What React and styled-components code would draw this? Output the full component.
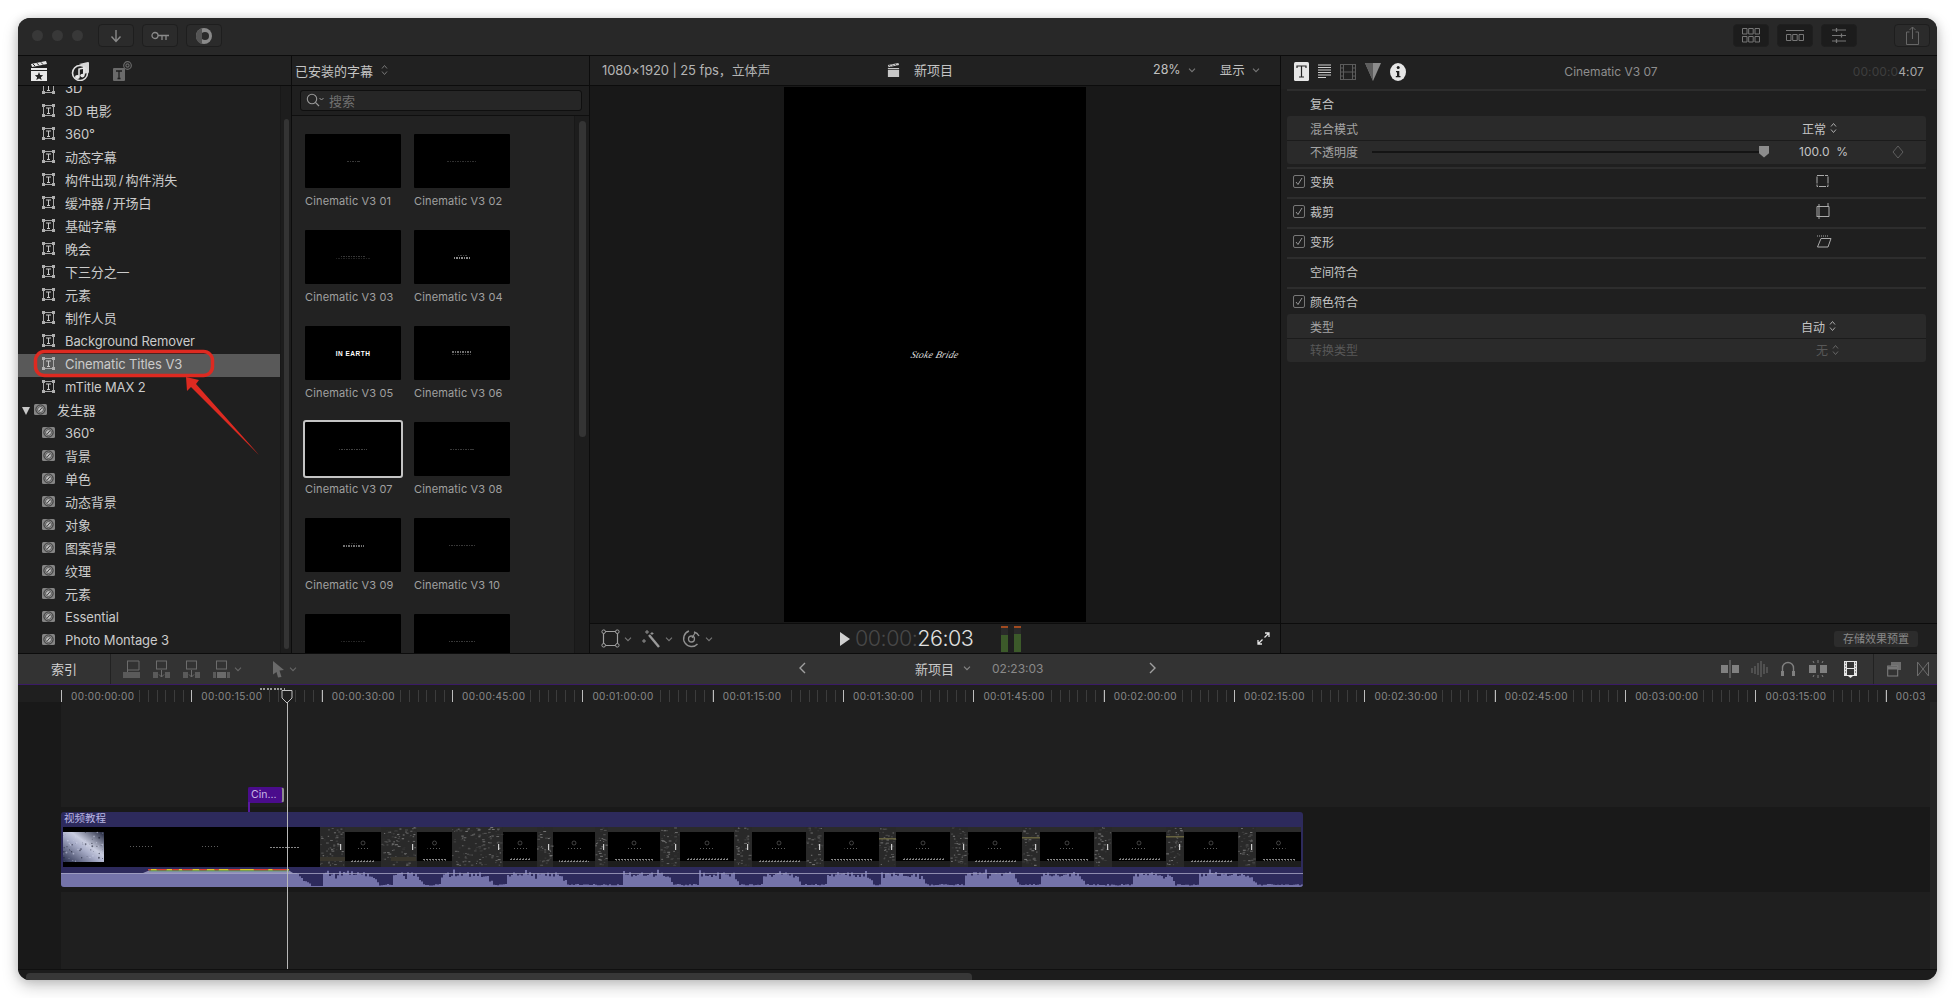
import React from 'react';
import styled, { createGlobalStyle } from 'styled-components';

const Global = createGlobalStyle`
  html, body { margin: 0; padding: 0; background: #fff; }
  body { font-family: Inter, "Noto Sans CJK SC", sans-serif; }
  * { box-sizing: border-box; }
`;

const Stage = styled.div`
  width: 1955px; height: 998px; padding: 18px 0 0 18px; background: #fff; overflow: hidden;
`;
const Win = styled.div`
  position: relative; width: 1919px; height: 962px; background: #1f1f1f;
  border-radius: 12px; overflow: hidden; display: flex; flex-direction: column;
`;
const WinShadow = styled.div`
  width: 1919px; height: 962px; border-radius: 12px;
  box-shadow: 0 6px 16px rgba(0,0,0,.22), 0 0 10px rgba(0,0,0,.14);
`;

/* title bar */
const TitleBar = styled.div`
  height: 38px; flex: none; background: #282828; border-bottom: 1px solid #0c0c0c;
  display: flex; align-items: center; padding: 0 7px 2px 14px;
`;
const Dot = styled.span`
  width: 11px; height: 11px; border-radius: 50%; background: #383838; margin-right: 9px;
`;
const TBtn = styled.div`
  width: 36px; height: 23px; border-radius: 4px; margin-left: ${p => p.$ml || 8}px;
  background: ${p => p.$dark ? '#1c1c1c' : '#2b2b2b'}; border: 1px solid ${p => p.$dark ? '#1f1f1f' : '#1e1e1e'};
  display: flex; align-items: center; justify-content: center;
`;
const Grow = styled.div`flex: 1;`;

/* workspace */
const Workspace = styled.div`
  height: 598px; flex: none; display: flex; border-bottom: 1px solid #0c0c0c;
`;
const Col = styled.div`
  width: ${p => p.$w}px; flex: none; display: flex; flex-direction: column; background: ${p => p.$bg || '#1f1f1f'};
  border-right: ${p => p.$noborder ? 'none' : '1px solid #0c0c0c'}; overflow: hidden;
`;
const PanelHead = styled.div`
  height: 30px; flex: none; background: #212121; border-bottom: 1px solid #0c0c0c;
  display: flex; align-items: center; font-size: 13px; color: #c4c4c4;
  padding: ${p => p.$pad || '0 0 1px 12px'};
`;
const HeadGap = styled.span`width: 23px; flex: none;`;
const Body = styled.div`flex: 1; min-height: 0; display: flex; overflow: hidden;`;

/* sidebar */
const ListWrap = styled.div`width: 262px; flex: none; overflow: hidden;`;
const List = styled.div`margin-top: -8px;`;
const Row = styled.div`
  height: 23px; display: flex; align-items: center; font-size: 13px; color: #cbcbcb;
  padding: 0 0 4px ${p => p.$head ? 4 : 24}px;
  background: ${p => p.$sel ? '#595959' : 'transparent'}; white-space: nowrap;
  letter-spacing: -0.1px;
`;
const Slash = styled.span`margin: 0 2.2px;`;
const RowIcon = styled.span`
  width: 13px; height: 13px; flex: none; margin-right: 10px; display: flex;
`;
const Tri = styled.span`
  width: 0; height: 0; margin: 2px 4px 0 0; border-left: 4px solid transparent; border-right: 4px solid transparent;
  border-top: 8px solid #c8c8c8;
`;
const ScrollTrack = styled.div`
  width: ${p => p.$w || 11}px; flex: none; background: #1d1d1d; border-left: 1px solid #181818; padding: ${p => p.$pad || '33px 2px 3px 3px'};
`;
const ScrollThumb = styled.div`
  width: ${p => p.$w || 5}px; height: ${p => p.$h}px; border-radius: 4px; background: #343434;
`;

/* browser */
const BrowserTitle = styled.span`margin-left: -9px; display: flex; align-items: center; gap: 8px; font-size: 13px;`;
const SearchRow = styled.div`height: 30px; flex: none; padding: 4px 7px 4px 8px; border-bottom: 1px solid #0f0f0f; background: #1f1f1f;`;
const Search = styled.div`
  height: 21px; border: 1px solid #0f0f0f; border-radius: 3px; background: #262626;
  display: flex; align-items: center; padding: 0 0 1px 5px; gap: 4px; font-size: 13px; color: #707070;
`;
const BrowserBody = styled.div`flex: 1; min-height: 0; display: flex; background: #222;`;
const Grid = styled.div`
  width: 282px; flex: none; display: grid; grid-template-columns: 96px 96px; column-gap: 13px; grid-auto-rows: 96px;
  padding: 18px 0 0 13px; overflow: hidden; align-content: start;
`;
const Cell = styled.div`display: flex; flex-direction: column;`;
const Thumb = styled.div`
  height: 54px; background: #000; border-radius: 1px; display: flex; flex-direction: column; align-items: center; justify-content: center; gap: 1px;
  outline: ${p => p.$sel ? '2px solid #c4c4c4' : 'none'};
`;
const ThumbBar = styled.span`
  width: ${p => p.$w}px; height: ${p => p.$h || 1}px; opacity: ${p => p.$o || .4};
  background: repeating-linear-gradient(90deg, #bbb 0 1.5px, transparent 1.5px 2.5px);
`;
const ThumbText = styled.span`
  font: 700 6.5px "Liberation Sans", sans-serif; color: #fff; letter-spacing: .5px; line-height: 7px; transform: scaleY(1.2);
`;
const CellLabel = styled.div`margin-top: 6px; font-size: 11px; color: #a0a0a0; letter-spacing: .15px; line-height: 14px; white-space: nowrap;`;

/* viewer */
const ViewerHead = styled.div`
  height: 30px; flex: none; background: #212121; border-bottom: 1px solid #0c0c0c;
  display: flex; align-items: center; padding: 0 14px 2px 12px; font-size: 13px; color: #b4b4b4;
`;
const ViewerFormat = styled.span`width: 168px; flex: none; white-space: nowrap; letter-spacing: -.1px;`;
const ViewerCenter = styled.div`
  display: flex; align-items: center; gap: 14px; margin-left: 117px; color: #c4c4c4; font-size: 13px;
`;
const ViewerDrop = styled.div`
  display: flex; align-items: center; gap: 7px; margin-left: ${p => p.$ml}px; color: #c0c0c0; font-size: 12.5px;
`;
const Chevron = ({ c = '#777', s = 8 }) => (
  <svg width={s} height={s} viewBox="0 0 8 8" fill="none"><path d="M1 2.6 L4 5.6 L7 2.6" stroke={c} strokeWidth="1.1" /></svg>
);
const Updown = ({ c = '#999' }) => (
  <svg width="7" height="12" viewBox="0 0 7 12" fill="none"><path d="M1 4.5 L3.5 1.5 L6 4.5 M1 7.5 L3.5 10.5 L6 7.5" stroke={c} strokeWidth="1" /></svg>
);
const ViewerStage = styled.div`
  flex: 1; min-height: 0; background: #181818; display: flex; justify-content: center; padding-top: 1px;
`;
const Video = styled.div`
  width: 302px; height: 535px; background: #000; display: flex; align-items: center; justify-content: center;
`;
const Signature = styled.span`
  font: italic 400 10px/10px "Liberation Serif", serif; color: #dcdcdc; letter-spacing: .1px; transform: skewX(-16deg);
`;
const ViewerFoot = styled.div`
  height: 30px; flex: none; background: #1f1f1f; border-top: 1px solid #0c0c0c; display: flex; align-items: center; padding: 0 10px 0 11px;
`;
const Tool = styled.div`display: flex; align-items: center; gap: 4px; margin-right: ${p => p.$mr || 9}px;`;
const Timecode = styled.div`
  font-size: 21.5px; font-weight: 300; color: #e2e2e2; letter-spacing: -.5px; margin: 0 0 2px 5px; line-height: 24px;
`;
const TcDim = styled.span`color: #484848;`;
const Meter = styled.div`
  width: 7px; height: 26px; margin-left: ${p => p.$ml}px; display: flex; flex-direction: column; background: #2a2a2a;
`;
const MeterCap = styled.div`height: 2px; background: #a04a20;`;
const MeterGap = styled.div`height: ${p => p.$h}px;`;
const MeterFill = styled.div`flex: 1; background: #3c5a2a;`;

/* inspector */
const InspHead = styled.div`
  height: 33px; flex: none; padding: 0 13px 2px 13px; display: flex; align-items: center; background: #212121;
`;
const InspIcons = styled.div`display: flex; align-items: center; gap: 9px; width: 120px;`;
const InspTitle = styled.div`flex: 1; text-align: center; font-size: 12px; color: #8e8e8e; padding-right: 36px;`;
const InspTc = styled.div`font-size: 12px; color: #a8a8a8; letter-spacing: .1px; width: 80px; text-align: right;`;
const TcFaint = styled.span`color: #3e3e3e;`;
const InspBody = styled.div`flex: 1; padding: 0 11px 0 6px; background: #1f1f1f;`;
const Sep = styled.div`height: 2px; background: #2d2d2d; margin-top: ${p => p.$mt || 0}px;`;
const IRow = styled.div`
  height: ${p => p.$h || 28}px; display: flex; align-items: center; font-size: 12px; color: #c4c4c4;
  padding: 0 0 ${p => p.$h ? 0 : 4}px 23px;
`;
const Check = styled.span`
  width: 12px; height: 13px; border: 1px solid #777; border-radius: 2px; margin: 0 5px 0 -17px; display: flex; align-items: center; justify-content: center;
`;
const IGroup = styled.div`
  background: #2a2a2a; border-radius: 3px; margin: ${p => p.$m || '0'};
`;
const GRow = styled.div`
  height: 24px; display: flex; align-items: center; padding: 0 0 ${p => p.$line ? 2 : 0}px 23px; font-size: 12px; color: ${p => p.$dim ? '#585858' : '#a4a4a4'};
  border-top: ${p => p.$line ? '1px solid #1b1b1b' : 'none'};
`;
const Value = styled.div`
  margin-left: ${p => p.$ml}px; display: flex; align-items: center; gap: 4px; color: ${p => p.$dim ? '#585858' : '#c4c4c4'}; font-size: 12px;
  width: ${p => p.$w ? p.$w + 'px' : 'auto'}; white-space: nowrap;
`;
const SliderTrack = styled.div`
  width: 393px; height: 2px; background: #141414; margin-left: 14px; position: relative;
`;
const SliderKnob = styled.span`
  position: absolute; right: -4px; top: -5px; width: 10px; height: 12px; background: #8c8c8c;
  clip-path: polygon(0 0, 100% 0, 100% 65%, 50% 100%, 0 65%);
`;
const IconSlot = styled.div`margin-left: ${p => p.$ml}px; display: flex;`;
const InspFoot = styled.div`
  height: 30px; flex: none; background: #1f1f1f; border-top: 1px solid #0c0c0c; display: flex; justify-content: flex-end; align-items: center; padding: 0 19px 0 0;
`;
const SaveBtn = styled.div`
  width: 84px; height: 16px; border-radius: 3px; background: #2c2c2c; color: #888; font-size: 11px; text-align: center; line-height: 16px; white-space: nowrap;
`;

/* timeline toolbar */
const TimeBar = styled.div`
  height: 31px; flex: none; background: #333; border-bottom: 1px solid #3a1a66; display: flex; align-items: center; font-size: 13px; color: #c8c8c8;
`;
const IndexTab = styled.div`
  width: 93px; height: 30px; border-right: 1px solid #222; display: flex; align-items: center; padding: 0 0 2px 33px; flex: none; color: #d0d0d0;
`;
const ToolIcons = styled.div`display: flex; align-items: center; gap: 13px; padding-left: 12px; width: 400px;`;
const TimeMid = styled.div`display: flex; align-items: center; padding: 0 0 2px 287px;`;
const ProjName = styled.span`margin-left: 109px; color: #c8c8c8;`;
const ProjChev = styled.span`margin-left: 9px; display: flex;`;
const ProjDur = styled.span`margin-left: 7px; width: 171px; color: #8a8a8a; font-size: 12px; padding-left: 14px;`;
const TimeRight = styled.div`margin-left: auto; display: flex; align-items: center; gap: 12px; padding-right: 8px;`;
const RightDiv = styled.div`width: 1px; height: 30px; background: #222; margin-left: 4px;`;
const RIcon = styled.span`display: flex; margin-left: ${p => p.$ml || 0}px;`;

/* ruler */
const TimelineBody = styled.div`position: relative; flex: 1; min-height: 0; display: flex; flex-direction: column;`;
const RulerBar = styled.div`
  height: 17px; flex: none; display: flex; padding-left: 43px; background: #1f1f1f;
`;
const Seg = styled.div`
  width: 130.35px; flex: none; height: 13px; margin-top: 5px; padding-left: 10px;
  background:
    linear-gradient(#bdbdbd,#bdbdbd) 0 0 / 1px 100% no-repeat,
    repeating-linear-gradient(90deg, #3c3c3c 0 1px, transparent 1px 8.69px) 0 0 / 100% 100%;
`;
const SegLabel = styled.span`
  display: block; width: 67px; margin-left: -2px; padding-left: 2px; background: #1f1f1f; font-size: 10px; line-height: 12px; color: #8a8a8a; letter-spacing: .4px; white-space: nowrap;
`;
const Tracks = styled.div`flex: 1; min-height: 0; display: flex;`;
const Gutter = styled.div`width: 43px; flex: none; background: #191919;`;
const TrackCol = styled.div`flex: 1; display: flex; flex-direction: column;`;
const UpperLane = styled.div`
  height: 105px; flex: none; padding: 85px 0 0 187px; background: #1f1f1f;
`;
const ConnClip = styled.div`
  width: 36px; height: 16px; position: relative; background: #4a0c8c; border-radius: 2px 3px 3px 0; border: 1px solid #4a0c8c; border-right: 2px solid #8d8d8d;
  color: #c9b7e6; font-size: 10.5px; line-height: 14px; padding-left: 2px;
`;
const ConnStem = styled.span`
  position: absolute; left: -1px; top: 14px; width: 2px; height: 10px; background: #5a1aa0;
`;
const Band = styled.div`height: 85px; flex: none; background: #191919; padding-top: 5px;`;
const Clip = styled.div`
  width: 1242px; height: 75px; background: #2d2a5c; border-radius: 3px; overflow: hidden; display: flex; flex-direction: column;
`;
const ClipHead = styled.div`
  height: 15px; flex: none; font-size: 10.5px; line-height: 14px; color: #b9b6e4; padding-left: 3px;
`;
const LowerLane = styled.div`flex: 1; background: #1f1f1f;`;
const VScroll = styled.div`width: 7px; flex: none; background: #252525;`;
const HScroll = styled.div`
  height: 11px; flex: none; border-top: 1px solid #101010; background: #1c1c1c; padding-top: 3px; padding-left: 8px;
`;
const HThumb = styled.div`width: 946px; height: 7px; background: #373737; border-radius: 4px 4px 0 0;`;

/* overlays */
const Playhead = styled.div`
  position: absolute; left: 268.5px; top: 6px; width: 1px; height: 278px; background: #b8b8b8;
`;
const PlayHandle = styled.svg`position: absolute; left: -5.5px; top: -1px;`;
const Dotted = styled.div`
  position: absolute; left: 242px; top: 3px; width: 25px; height: 2px;
  background: repeating-linear-gradient(90deg, #9a9a9a 0 2px, transparent 2px 3.4px);
`;
const Annotation = styled.svg`position: absolute; left: 0; top: 0; pointer-events: none;`;

/* icons */
const Box = ({ w, h, children, vb }) => <svg width={w} height={h} viewBox={vb || `0 0 ${w} ${h}`} fill="none">{children}</svg>;

const TitleIco = () => (
  <Box w={13} h={13}>
    <rect x="1.5" y="1.5" width="10" height="10" stroke="#a8a8a8" />
    <rect x="0" y="0" width="3" height="3" fill="#b0b0b0" /><rect x="10" y="0" width="3" height="3" fill="#b0b0b0" />
    <rect x="0" y="10" width="3" height="3" fill="#b0b0b0" /><rect x="10" y="10" width="3" height="3" fill="#b0b0b0" />
    <path d="M4 4 H9 M6.5 4 V9.5 M5 9.5 H8" stroke="#c8c8c8" />
  </Box>
);
const GenIco = () => (
  <Box w={13} h={13}>
    <rect x="0" y="1" width="13" height="11" rx="1.5" fill="#858585" />
    <circle cx="6.5" cy="6.5" r="4.6" fill="#8e8e8e" stroke="#2a2a2a" strokeWidth=".9" />
    <circle cx="6.5" cy="6.5" r="2.9" fill="#bcbcbc" stroke="#333" strokeWidth=".7" />
    <path d="M5.2 8 L7.8 5" stroke="#333" strokeWidth=".9" />
  </Box>
);
const Clapper = ({ c = '#e8e8e8', w = 18, h = 20, star }) => (
  <svg width={w} height={h} viewBox="0 0 18 20" fill="none">
    <path d="M1 3 L16 0 L17 3 L2 6 Z" fill={c} />
    <path d="M3 3 L5 5 M7 2.2 L9 4.4 M11 1.4 L13 3.6" stroke="#222" strokeWidth="1" />
    <path d="M1 7 H17 V9 H1 Z" fill={c} />
    <path d="M1 10 H17 V20 H1 Z" fill={c} />
    {star && <path d="M9 11 L10.2 14 L13.2 14.2 L10.9 16.2 L11.7 19 L9 17.4 L6.3 19 L7.1 16.2 L4.8 14.2 L7.8 14 Z" fill="#222" />}
  </svg>
);
const MusicCam = () => (
  <svg width="19" height="20" viewBox="0 0 19 20" fill="none">
    <path d="M8 3 L17 1 A1 1 0 0 1 18 2 V11 A1 1 0 0 1 17 12 L12 13 V5 Z" fill="#d8d8d8" />
    <circle cx="9" cy="12" r="7.5" stroke="#e0e0e0" strokeWidth="1.6" />
    <path d="M8 15.5 V8 L13 7 V14" stroke="#e8e8e8" strokeWidth="1.5" />
    <ellipse cx="6.4" cy="16" rx="2.4" ry="1.9" fill="#e8e8e8" />
    <ellipse cx="11.4" cy="14.6" rx="2.2" ry="1.8" fill="#e8e8e8" />
  </svg>
);
const TitleGen = () => (
  <svg width="19" height="20" viewBox="0 0 19 20" fill="none">
    <rect x="0" y="7" width="12" height="13" rx="1" fill="#6a6a6a" />
    <path d="M3 10 H9 M6 10 V17.5 M4.5 17.5 H7.5" stroke="#1f1f1f" strokeWidth="1.3" />
    <circle cx="14.5" cy="4.5" r="3.8" stroke="#6a6a6a" strokeWidth="1.2" />
    <circle cx="14.5" cy="4.5" r="1.6" stroke="#6a6a6a" strokeWidth="1.2" />
  </svg>
);

const sideItems1 = ['3D', '3D 电影', '360°', '动态字幕', '构件出现/构件消失', '缓冲器/开场白', '基础字幕', '晚会', '下三分之一', '元素', '制作人员', 'Background Remover', 'Cinematic Titles V3', 'mTitle MAX 2'];
const sideItems2 = ['360°', '背景', '单色', '动态背景', '对象', '图案背景', '纹理', '元素', 'Essential', 'Photo Montage 3'];

const thumbs = [
  ['01', [[13, 1, .3]]], ['02', [[30, 1, .25]]], ['03', [[24, 1, .3], [34, 1, .18]]], ['04', [[9, 1, .35], [16, 2, .75]]],
  ['05', null], ['06', [[20, 2, .6], [20, 1, .3]]], ['07', [[28, 1, .35]]], ['08', [[24, 1, .3]]],
  ['09', [[8, 1, .2], [21, 2, .6]]], ['10', [[26, 1, .3]]], ['11', [[24, 1, .2]]], ['12', [[26, 1, .3]]],
];

const ticks = ['00:00:00:00','00:00:15:00','00:00:30:00','00:00:45:00','00:01:00:00','00:01:15:00','00:01:30:00','00:01:45:00','00:02:00:00','00:02:15:00','00:02:30:00','00:02:45:00','00:03:00:00','00:03:15:00','00:03'];

function rng(seed) { let s = seed; return () => { s = (s * 16807) % 2147483647; return s / 2147483647; }; }

const panels = [[320,345],[381,417],[452,503],[537,553],[595,608],[660,680],[734,752],[806,824],[879,896],[950,968],[1022,1040],[1094,1112],[1166,1184],[1238,1256]];

const FilmStrip = () => {
  const r = rng(77);
  const els = [];
  const W = 1238, OX = 63;
  els.push(<rect key="bg" x="0" y="0" width={W} height="40" fill="#000" />);
  els.push(<rect key="neb" x="0" y="5" width="41" height="30" fill="url(#neb)" />);
  for (let i = 0; i < 70; i++) {
    els.push(<circle key={'n' + i} cx={r() * 41} cy={5 + r() * 30} r={r() * .8 + .2} fill={r() > .5 ? '#d0d4e8' : '#0c1020'} opacity=".55" />);
  }
  els.push(<rect key="t1" x="66" y="19" width="23" height="1" fill="url(#streak)" />);
  els.push(<rect key="t2" x="139" y="19" width="18" height="1" fill="url(#streak)" />);
  els.push(<rect key="t3" x="206" y="20" width="30" height="1" fill="url(#streak)" />);
  els.push(<rect key="band" x={320 - OX} y="0" width={W - 320 + OX} height="5" fill="#2b2b2b" />);
  els.push(<rect key="band2" x={320 - OX} y="34" width={W - 320 + OX} height="6" fill="#1d1d1d" />);
  panels.forEach(([a, b], k) => {
    const x = a - OX, w = b - a;
    els.push(<rect key={'pb' + k} x={x} y="0" width={w} height="40" fill="#292929" />);
    for (let i = 0; i < w * 2.6; i++) {
      const px = x + r() * (w - 2), py = r() * 38;
      const v = Math.floor(45 + r() * 80);
      els.push(<rect key={`p${k}-${i}`} x={px} y={py} width={1 + r() * 2} height="1" fill={`rgb(${v},${v},${v})`} />);
    }
    els.push(<rect key={'pw' + k} x={x + w - 5} y="17" width="1.2" height="6" fill="#cfcfcf" />);
    if (k > 6 && k % 2 === 0) els.push(<rect key={'y' + k} x={x} y={9 + (k % 3)} width={w} height="1.5" fill="#66623f" />);
    const next = panels[k + 1] ? panels[k + 1][0] - OX : W;
    const bx = x + w, bw = next - bx;
    if (bw > 20) {
      els.push(<circle key={'c' + k} cx={bx + bw / 2} cy="16" r="2" stroke="#6a6a6a" strokeWidth=".6" />);
      els.push(<rect key={'u' + k} x={bx + bw / 2 - 7} y="21" width="14" height="1" fill="url(#streak)" />);
      els.push(<rect key={'s' + k} x={bx + 6} y={33 - (k % 3)} width={bw - 12} height="2" fill="url(#streak)" />);
    }
  });
  els.push(<rect key="sb1" x={320 - OX} y="30" width="25" height="4" fill="#38352c" />);
  els.push(<rect key="sb2" x={391 - OX} y="30" width="25" height="4" fill="#38352c" />);
  return (
    <svg width={W} height="40" viewBox={`0 0 ${W} 40`} style={{ display: 'block', marginLeft: 2 }}>
      <defs>
        <linearGradient id="neb" x1="0" y1="1" x2="1" y2="0">
          <stop offset="0" stopColor="#262c4a" /><stop offset=".45" stopColor="#a8adc8" /><stop offset=".6" stopColor="#c9cde0" /><stop offset="1" stopColor="#1d2238" />
        </linearGradient>
        <pattern id="streak" width="3" height="2" patternUnits="userSpaceOnUse">
          <rect width="2" height="1" fill="#888" /><rect x="1" y="1" width="1" height="1" fill="#5c5c5c" />
        </pattern>
      </defs>
      {els}
    </svg>
  );
};

const blocks = [[322,377],[393,421],[440,492],[507,566],[623,672],[699,737],[763,799],[827,872],[881,925],[964,1018],[1040,1083],[1132,1174],[1198,1255]];
const Wave = () => {
  const r = rng(1234);
  const X0 = 61, W = 1242, H = 20;
  let d = `M0 ${H} L0 6 `;
  for (let px = X0; px < X0 + W; px += 2) {
    let h;
    if (px < 296) h = 14;
    else if (px < 310) h = 14 - (px - 296) * .8 - r() * 2.5;
    else if (px < 322) h = 1;
    else {
      const b = blocks.find(([a, e]) => px >= a && px <= e);
      if (b) {
        const t = (px - b[0]) / (b[1] - b[0]);
        const env = t > .85 ? Math.max(.4, 1 - (t - .85) * 4) : 1;
        h = (10 + r() * 5 + (r() > .85 ? 3 : 0)) * env;
        if (r() > .9) h *= .75;
      } else h = 1.5 + r() * 1.5;
    }
    const y = Math.max(0, H - h);
    d += `L${px - X0} ${y.toFixed(1)} L${px - X0 + 2} ${y.toFixed(1)} `;
  }
  d += `L${W} ${H} Z`;
  const segs = [];
  let sx = 87, i = 0;
  const rr = rng(55);
  while (sx < 228) {
    const w = 3 + rr() * 12;
    segs.push(<rect key={i} x={sx} y="2" width={Math.min(w, 228 - sx)} height="1.3" fill={i % 2 === 0 ? '#e23a2a' : '#e6c21f'} />);
    sx += w; i++;
  }
  return (
    <svg width={W} height={H} viewBox={`0 0 ${W} ${H}`} style={{ display: 'block' }}>
      <path d={d} fill="#7473a9" />
      <path d="M82 6 L88 3.5 L228 3.5 L232 6 Z" fill="#8f8eb8" />
      <rect x="88" y="3.3" width="140" height="1" fill="#46a64a" />
      {segs}
      <rect x="0" y="6" width={W} height="1" fill="#a6a5c4" opacity=".8" />
    </svg>
  );
};

const GS = '#6c6c6c';
const MarkerFlag = () => (
  <Box w={17} h={19}>
    <path d="M4 1 H16 V10 H4" stroke={GS} /><path d="M4.5 1 V12" stroke={GS} />
    <rect x="0" y="12" width="17" height="6" fill="#5a5a5a" />
  </Box>
);
const Insert = ({ fill = '#5a5a5a', mid }) => (
  <Box w={17} h={19}>
    <rect x="3.5" y="1" width="10" height="8" stroke={GS} />
    <rect x="0" y="12" width={mid ? 3 : 5} height="6" fill={fill} />
    <rect x={mid ? 4 : 12} y="12" width={mid ? 9 : 5} height="6" fill={mid ? '#6a6a6a' : fill} />
    {mid && <rect x="14" y="12" width="3" height="6" fill={fill} />}
    {!mid && <path d="M8.5 10 V17 M6 14.5 L8.5 17 L11 14.5" stroke={GS} />}
  </Box>
);

const withSlash = t => {
  const parts = t.split('/');
  if (parts.length < 2) return t;
  return <span>{parts[0]}<Slash>/</Slash>{parts[1]}</span>;
};

function Sidebar() {
  return (
    <Col $w={274}>
      <PanelHead $pad="0 0 0 12px">
        <Clapper star /><HeadGap /><MusicCam /><HeadGap /><TitleGen />
      </PanelHead>
      <Body>
        <ListWrap>
          <List>
            {sideItems1.map(t => (
              <Row key={t} $sel={t.startsWith('Cinematic')}><RowIcon><TitleIco /></RowIcon>{withSlash(t)}</Row>
            ))}
            <Row $head><Tri /><RowIcon><GenIco /></RowIcon>发生器</Row>
            {sideItems2.map(t => (
              <Row key={t + 'g'}><RowIcon><GenIco /></RowIcon>{t}</Row>
            ))}
          </List>
        </ListWrap>
        <ScrollTrack><ScrollThumb $h={530} /></ScrollTrack>
      </Body>
    </Col>
  );
}

function Browser() {
  return (
    <Col $w={298} $bg="#222">
      <PanelHead>
        <BrowserTitle>已安装的字幕<Updown c="#777" /></BrowserTitle>
      </PanelHead>
      <SearchRow>
        <Search>
          <svg width="19" height="14" viewBox="0 0 19 14" fill="none">
            <circle cx="6" cy="6" r="4.7" stroke="#999" strokeWidth="1.1" /><path d="M9.4 9.4 L13 13" stroke="#999" strokeWidth="1.2" /><path d="M13.5 5 L15.5 7 L17.5 5" stroke="#999" />
          </svg>
          搜索
        </Search>
      </SearchRow>
      <BrowserBody>
        <Grid>
          {thumbs.map(([n, bars]) => (
            <Cell key={n}>
              <Thumb $sel={n === '07'}>
                {bars ? bars.map(([w, h, o], j) => <ThumbBar key={j} $w={w} $h={h} $o={o} />) : <ThumbText>IN EARTH</ThumbText>}
              </Thumb>
              <CellLabel>Cinematic V3 {n}</CellLabel>
            </Cell>
          ))}
        </Grid>
        <ScrollTrack $w={15} $pad="5px 3px 0 4px"><ScrollThumb $w={7} $h={316} /></ScrollTrack>
      </BrowserBody>
    </Col>
  );
}

function Viewer() {
  return (
    <Col $w={691} $bg="#181818">
      <ViewerHead>
        <ViewerFormat>1080×1920 | 25 fps，立体声</ViewerFormat>
        <ViewerCenter>
          <Clapper c="#c8c8c8" w={13} h={14} /><span>新项目</span>
        </ViewerCenter>
        <ViewerDrop $ml={200}>28% <Chevron /></ViewerDrop>
        <ViewerDrop $ml={24}>显示 <Chevron /></ViewerDrop>
      </ViewerHead>
      <ViewerStage>
        <Video><Signature>Stoke Bride</Signature></Video>
      </ViewerStage>
      <ViewerFoot>
        <Tool $mr={9}>
          <svg width="19" height="19" viewBox="0 0 19 19" fill="none">
            <rect x="2.5" y="2.5" width="14" height="14" rx="1" stroke="#a0a0a0" strokeWidth="1.2" />
            <circle cx="2.7" cy="2.7" r="1.8" fill="#1f1f1f" stroke="#a0a0a0" /><circle cx="16.3" cy="2.7" r="1.8" fill="#1f1f1f" stroke="#a0a0a0" />
            <circle cx="2.7" cy="16.3" r="1.8" fill="#1f1f1f" stroke="#a0a0a0" /><circle cx="16.3" cy="16.3" r="1.8" fill="#1f1f1f" stroke="#a0a0a0" />
          </svg><Chevron />
        </Tool>
        <Tool $mr={9}>
          <svg width="20" height="20" viewBox="0 0 20 20" fill="none">
            <path d="M8 6 L18 18" stroke="#9a9a9a" strokeWidth="2.4" />
            <path d="M6 1 V5 M4 3 H8 M3 10 V14 M1 12 H5 M11 3 V6 M9.5 4.5 H12.5" stroke="#9a9a9a" strokeWidth=".9" />
          </svg><Chevron />
        </Tool>
        <Tool $mr={127}>
          <svg width="19" height="19" viewBox="0 0 19 19" fill="none">
            <path d="M7 2 A8 8 0 1 0 15.5 15" stroke="#909090" strokeWidth="1.4" />
            <path d="M12 3 A8 8 0 0 1 17 7" stroke="#909090" strokeWidth="1.4" />
            <circle cx="9.5" cy="10" r="3" stroke="#909090" strokeWidth="1.3" /><path d="M10 9 L13 4" stroke="#909090" strokeWidth="1.2" />
          </svg><Chevron />
        </Tool>
        <svg width="10" height="14" viewBox="0 0 10 14"><path d="M0 0 L10 7 L0 14 Z" fill="#d0d0d0" /></svg>
        <Timecode><TcDim>00:00:</TcDim>26:03</Timecode>
        <Meter $ml={28}><MeterCap /><MeterGap $h={7} /><MeterFill /></Meter>
        <Meter $ml={6}><MeterCap /><MeterGap $h={6} /><MeterFill /></Meter>
        <Grow />
        <svg width="13" height="13" viewBox="0 0 13 13" fill="none">
          <path d="M7.5 5.5 L12 1 M8 1 H12 V5 M5.5 7.5 L1 12 M1 8 V12 H5" stroke="#e4e4e4" strokeWidth="1.3" />
        </svg>
      </ViewerFoot>
    </Col>
  );
}

const Ck = () => (
  <Check>
    <svg width="8" height="9" viewBox="0 0 8 9" fill="none"><path d="M1 5 L3 7.5 L7 1" stroke="#999" /></svg>
  </Check>
);

function Inspector() {
  return (
    <Col $w={656} $noborder>
      <InspHead>
        <InspIcons>
          <svg width="15" height="19" viewBox="0 0 15 19" fill="none">
            <rect width="15" height="19" rx="1.5" fill="#e6e6e6" /><path d="M3 6 V4 H12 V6 M7.5 4 V15 M5 15 H10" stroke="#222" strokeWidth="1.2" />
          </svg>
          <svg width="13" height="16" viewBox="0 0 13 16" fill="none">
            <path d="M0 1 H13 M0 3.5 H13 M0 6 H13 M0 8.5 H13 M0 11 H13 M0 13.5 H8" stroke="#cfcfcf" strokeWidth="1.1" />
          </svg>
          <svg width="16" height="16" viewBox="0 0 16 16" fill="none">
            <rect x=".5" y=".5" width="15" height="15" stroke="#5c5c5c" /><path d="M3.5 .5 V15.5 M12.5 .5 V15.5 M.5 8 H15.5 M.5 4 H3.5 M.5 12 H3.5 M12.5 4 H15.5 M12.5 12 H15.5" stroke="#5c5c5c" />
          </svg>
          <svg width="16" height="19" viewBox="0 0 16 19"><path d="M0 1 L16 1 L8 19 Z" fill="#8c8c8c" /><path d="M0 1 L8 1 L8 19 Z" fill="#5e5e5e" /></svg>
          <svg width="16" height="18" viewBox="0 0 16 18">
            <ellipse cx="8" cy="9" rx="8" ry="9" fill="#e6e6e6" />
            <circle cx="8.2" cy="4.6" r="1.5" fill="#1f1f1f" /><path d="M6 8 H9.3 V13 H10.5 V14.2 H5.8 V13 H7 V9.2 H6 Z" fill="#1f1f1f" />
          </svg>
        </InspIcons>
        <InspTitle>Cinematic V3 07</InspTitle>
        <InspTc><TcFaint>00:00:0</TcFaint>4:07</InspTc>
      </InspHead>
      <InspBody>
        <Sep />
        <IRow $h={25}>复合</IRow>
        <IGroup>
          <GRow>混合模式<Value $ml={444}>正常 <Updown c="#aaa" /></Value></GRow>
          <GRow $line>
            不透明度
            <SliderTrack><SliderKnob /></SliderTrack>
            <Value $ml={34} $w={46}>100.0&nbsp;&nbsp;%</Value>
            <IconSlot $ml={47}>
              <svg width="12" height="14" viewBox="0 0 12 14" fill="none"><path d="M6 1 L11 7 L6 13 L1 7 Z" stroke="#5f5f5f" /></svg>
            </IconSlot>
          </GRow>
        </IGroup>
        <Sep $mt={3} />
        <IRow><Ck />变换
          <IconSlot $ml={482}>
            <svg width="13" height="14" viewBox="0 0 13 14" fill="none"><rect x="1" y="1.5" width="11" height="11" stroke="#aaa" strokeDasharray="7 1 3 1" /></svg>
          </IconSlot>
        </IRow>
        <Sep />
        <IRow><Ck />裁剪
          <IconSlot $ml={482}>
            <svg width="14" height="17" viewBox="0 0 14 17" fill="none"><path d="M1 14 V3.5 H13 V13.5 H1 M3 1 V16 M12 0 V3" stroke="#aaa" /></svg>
          </IconSlot>
        </IRow>
        <Sep />
        <IRow><Ck />变形
          <IconSlot $ml={482}>
            <svg width="16" height="13" viewBox="0 0 16 13" fill="none"><path d="M5 3.5 H15 L12 12 H1.5 Z" stroke="#aaa" /><path d="M1 1 H13" stroke="#aaa" strokeDasharray="1 1" /></svg>
          </IconSlot>
        </IRow>
        <Sep />
        <IRow>空间符合</IRow>
        <Sep />
        <IRow><Ck />颜色符合</IRow>
        <IGroup $m="-3px 0 0">
          <GRow>类型<Value $ml={467}>自动 <Updown c="#aaa" /></Value></GRow>
          <GRow $line $dim>转换类型<Value $dim $ml={458}>无 <Updown c="#666" /></Value></GRow>
        </IGroup>
      </InspBody>
      <InspFoot><SaveBtn>存储效果预置</SaveBtn></InspFoot>
    </Col>
  );
}

function Timeline() {
  return (
    <>
      <TimeBar>
        <IndexTab>索引</IndexTab>
        <ToolIcons>
          <MarkerFlag /><Insert /><Insert /><Tool $mr={18}><Insert mid /><Chevron c="#666" /></Tool>
          <Tool $mr={1}>
            <svg width="12" height="17" viewBox="0 0 12 17"><path d="M0 0 L11 9 L6.5 9.5 L8.5 16 L5 16.5 L3.5 11 L0 13.5 Z" fill="#6a6a6a" /></svg><Chevron c="#666" />
          </Tool>
        </ToolIcons>
        <TimeMid>
          <svg width="8" height="12" viewBox="0 0 8 12" fill="none"><path d="M7 1 L2 6 L7 11" stroke="#a0a0a0" strokeWidth="1.4" /></svg>
          <ProjName>新项目</ProjName>
          <ProjChev><Chevron c="#888" /></ProjChev>
          <ProjDur>02:23:03</ProjDur>
          <svg width="8" height="12" viewBox="0 0 8 12" fill="none"><path d="M1 1 L6 6 L1 11" stroke="#a0a0a0" strokeWidth="1.4" /></svg>
        </TimeMid>
        <TimeRight>
          <svg width="18" height="18" viewBox="0 0 18 18"><rect y="5" width="7" height="8" fill="#808080" /><rect x="11" y="5" width="7" height="8" fill="#808080" /><rect x="8.5" y="0" width="1" height="18" fill="#808080" /></svg>
          <svg width="18" height="18" viewBox="0 0 18 18" fill="none"><path d="M1 8 V13 M4 6 V14 M7 3 V15 M10 1 V17 M13 4 V14 M16 7 V13" stroke="#6e6e6e" /></svg>
          <svg width="14" height="16" viewBox="0 0 14 16" fill="none"><path d="M1.5 15 V7 A5.5 5.5 0 0 1 12.5 7 V15" stroke="#808080" strokeWidth="1.4" /><rect x="0" y="10" width="3" height="5" fill="#808080" /><rect x="11" y="10" width="3" height="5" fill="#808080" /></svg>
          <RIcon $ml={2}><svg width="18" height="18" viewBox="0 0 18 18"><rect y="5" width="7" height="8" fill="#808080" /><rect x="11" y="5" width="7" height="8" fill="#808080" /><path d="M9 0 V3 M9 15 V18 M4 1 L5 3 M14 1 L13 3 M4 17 L5 15 M14 17 L13 15" stroke="#808080" /></svg></RIcon>
          <RIcon $ml={5}><svg width="13" height="17" viewBox="0 0 13 17"><path d="M0 0 H13 V15 H9 L6.5 17 L4 15 H0 Z" fill="#e6e6e6" /><rect x="3" y="1" width="7" height="6" fill="#333" /><rect x="3" y="8" width="7" height="6" fill="#333" /><path d="M1 2 H2 M1 5 H2 M1 8 H2 M1 11 H2 M11 2 H12 M11 5 H12 M11 8 H12 M11 11 H12" stroke="#333" /></svg></RIcon>
          <RightDiv />
          <RIcon $ml={1}><svg width="15" height="16" viewBox="0 0 15 16" fill="none"><rect x="4" y="1" width="10" height="8" fill="#6e6e6e" /><rect x=".7" y="5" width="10" height="10" fill="#333" stroke="#808080" /><rect x="1" y="5.5" width="9.5" height="3" fill="#777" /></svg></RIcon>
          <RIcon $ml={3}><svg width="12" height="16" viewBox="0 0 12 16" fill="none"><path d="M.5 1 V15 L11.5 1 V15 Z" stroke="#6c6c6c" /></svg></RIcon>
        </TimeRight>
      </TimeBar>
      <TimelineBody>
        <RulerBar>
          {ticks.map(t => <Seg key={t}><SegLabel>{t}</SegLabel></Seg>)}
        </RulerBar>
        <Tracks>
          <Gutter />
          <TrackCol>
            <UpperLane>
              <ConnClip>Cin...<ConnStem /></ConnClip>
            </UpperLane>
            <Band>
              <Clip>
                <ClipHead>视频教程</ClipHead>
                <FilmStrip />
                <Wave />
              </Clip>
            </Band>
            <LowerLane />
          </TrackCol>
          <VScroll />
        </Tracks>
        <HScroll><HThumb /></HScroll>
        <Dotted />
        <Playhead>
          <PlayHandle width="12" height="14" viewBox="0 0 12 14" fill="none"><path d="M1 .5 H11 V8 L6 13 L1 8 Z" stroke="#c0c0c0" fill="#1f1f1f" /></PlayHandle>
        </Playhead>
      </TimelineBody>
    </>
  );
}

export default function App() {
  return (
    <Stage>
      <Global />
      <WinShadow>
        <Win>
          <TitleBar>
            <Dot /><Dot /><Dot />
            <TBtn $ml={6}>
              <svg width="12" height="14" viewBox="0 0 12 14" fill="none"><path d="M6 1 V12 M1.5 7.5 L6 12.5 L10.5 7.5" stroke="#8a8a8a" strokeWidth="1.4" /></svg>
            </TBtn>
            <TBtn>
              <svg width="19" height="10" viewBox="0 0 19 10" fill="none"><circle cx="4" cy="4.5" r="3" stroke="#8a8a8a" strokeWidth="1.3" /><path d="M7 4.5 H18 M11 4.5 V9 M15 4.5 V9" stroke="#8a8a8a" strokeWidth="1.3" /></svg>
            </TBtn>
            <TBtn>
              <svg width="16" height="16" viewBox="0 0 16 16"><circle cx="8" cy="8" r="8" fill="#8a8a8a" /><circle cx="9" cy="8" r="4" fill="#2b2b2b" /><path d="M0 8 A8 8 0 0 1 6 .3 L6 16 A8 8 0 0 1 0 8 Z" fill="#555" /></svg>
            </TBtn>
            <Grow />
            <TBtn $dark>
              <svg width="18" height="15" viewBox="0 0 18 15" fill="none"><path d="M.5 .5 H5 V6 H.5 Z M6.7 .5 H11.2 V6 H6.7 Z M13 .5 H17.5 V6 H13 Z M.5 8.5 H5 V14 H.5 Z M6.7 8.5 H11.2 V14 H6.7 Z M13 8.5 H17.5 V14 H13 Z" stroke="#777" /></svg>
            </TBtn>
            <TBtn $dark>
              <svg width="18" height="12" viewBox="0 0 18 12" fill="none"><path d="M0 .5 H18" stroke="#777" /><path d="M.5 4.5 H5 V10.5 H.5 Z M6.7 4.5 H11.2 V10.5 H6.7 Z M13 4.5 H17.5 V10.5 H13 Z" stroke="#777" /></svg>
            </TBtn>
            <TBtn $dark>
              <svg width="14" height="17" viewBox="0 0 14 17" fill="none"><path d="M0 3 H14 M0 8.5 H14 M0 14 H14" stroke="#777" /><path d="M4.5 1 V5 M9.5 6.5 V10.5 M4.5 12 V16" stroke="#777" strokeWidth="1.3" /></svg>
            </TBtn>
            <TBtn $ml={37}>
              <svg width="13" height="19" viewBox="0 0 13 19" fill="none"><path d="M3.5 6 H.5 V18.5 H12.5 V6 H9.5 M6.5 13 V1 M3.5 4 L6.5 1 L9.5 4" stroke="#666" /></svg>
            </TBtn>
          </TitleBar>
          <Workspace>
            <Sidebar />
            <Browser />
            <Viewer />
            <Inspector />
          </Workspace>
          <Timeline />
          <Annotation width="1919" height="962" viewBox="18 18 1919 962" fill="none">
            <rect x="35.5" y="351.5" width="177" height="24" rx="9" stroke="#dd2a21" strokeWidth="3.5" />
            <path d="M186 377 L199 380 L196 384 L259 455 L191 387 L187 391 Z" fill="#dd2a21" />
          </Annotation>
        </Win>
      </WinShadow>
    </Stage>
  );
}
